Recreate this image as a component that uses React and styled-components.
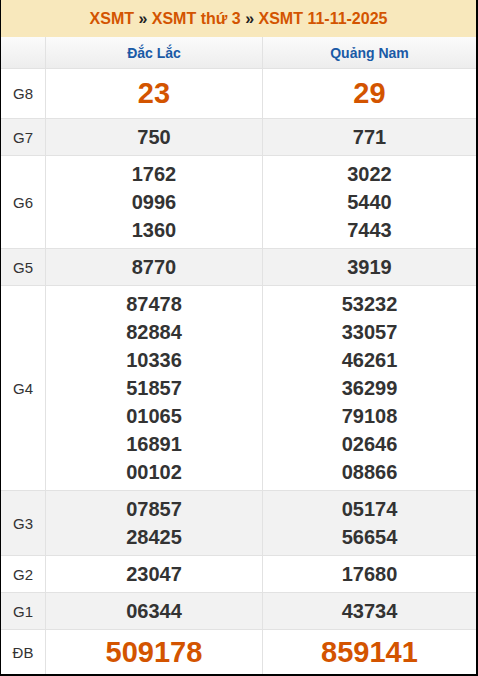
import React from 'react';
import styled, { createGlobalStyle } from 'styled-components';

const GlobalStyle = createGlobalStyle`
  body {
    margin: 0;
    background: #fff;
    font-family: "Liberation Sans", Arial, sans-serif;
  }
`;

const Board = styled.div`
  width: 478px;
  box-sizing: border-box;
  border-left: 1px solid #000;
  border-right: 2px solid #000;
  border-bottom: 2px solid #000;
  background: #fff;
`;

const Title = styled.div`
  height: 37px;
  background: #f8e8bc;
  display: flex;
  align-items: center;
  justify-content: center;
  font-size: 16px;
  font-weight: 700;
  color: #d35400;
  white-space: pre;
`;

const Sep = styled.span`
  color: #222;
`;

const Row = styled.div`
  display: grid;
  grid-template-columns: 45px 217px 1fr;
  background: ${p => (p.$shade ? '#f2f2f2' : '#fff')};
  border-bottom: ${p => (p.$last ? 'none' : '1px solid #e2e2e2')};
`;

const HeadRow = styled(Row)`
  height: 31px;
  background: linear-gradient(#fbfbfb, #ededed);
`;

const Cell = styled.div`
  display: flex;
  flex-direction: column;
  align-items: center;
  justify-content: center;
  padding: 4px 0;
  border-right: 1px solid #e2e2e2;
  &:last-child {
    border-right: none;
  }
`;

const Label = styled(Cell)`
  font-size: 15px;
  color: #333;
`;

const Province = styled(Cell)`
  padding: 0;
  font-size: 14px;
  font-weight: 700;
  color: #1a5aa6;
`;

const Num = styled.div`
  font-size: ${p => (p.$big ? '29px' : '20px')};
  line-height: ${p => p.$lh || '28px'};
  font-weight: 700;
  color: ${p => (p.$big ? '#d35400' : '#333')};
`;

const prizes = [
  { name: 'G8', a: ['23'], b: ['29'], big: true, lh: '41px' },
  { name: 'G7', a: ['750'], b: ['771'] },
  { name: 'G6', a: ['1762', '0996', '1360'], b: ['3022', '5440', '7443'] },
  { name: 'G5', a: ['8770'], b: ['3919'] },
  {
    name: 'G4',
    a: ['87478', '82884', '10336', '51857', '01065', '16891', '00102'],
    b: ['53232', '33057', '46261', '36299', '79108', '02646', '08866'],
  },
  { name: 'G3', a: ['07857', '28425'], b: ['05174', '56654'] },
  { name: 'G2', a: ['23047'], b: ['17680'] },
  { name: 'G1', a: ['06344'], b: ['43734'] },
  { name: 'ĐB', a: ['509178'], b: ['859141'], big: true, lh: '36px' },
];

const Numbers = ({ list, big, lh }) => (
  <Cell>
    {list.map(n => (
      <Num key={n} $big={big} $lh={lh}>{n}</Num>
    ))}
  </Cell>
);

export default function App() {
  return (
    <>
      <GlobalStyle />
      <Board>
        <Title>
          XSMT <Sep>»</Sep> XSMT thứ 3 <Sep>»</Sep> XSMT 11-11-2025
        </Title>
        <HeadRow>
          <Province />
          <Province>Đắc Lắc</Province>
          <Province>Quảng Nam</Province>
        </HeadRow>
        {prizes.map((p, i) => (
          <Row key={p.name} $shade={i % 2 === 1} $last={i === prizes.length - 1}>
            <Label>{p.name}</Label>
            <Numbers list={p.a} big={p.big} lh={p.lh} />
            <Numbers list={p.b} big={p.big} lh={p.lh} />
          </Row>
        ))}
      </Board>
    </>
  );
}
